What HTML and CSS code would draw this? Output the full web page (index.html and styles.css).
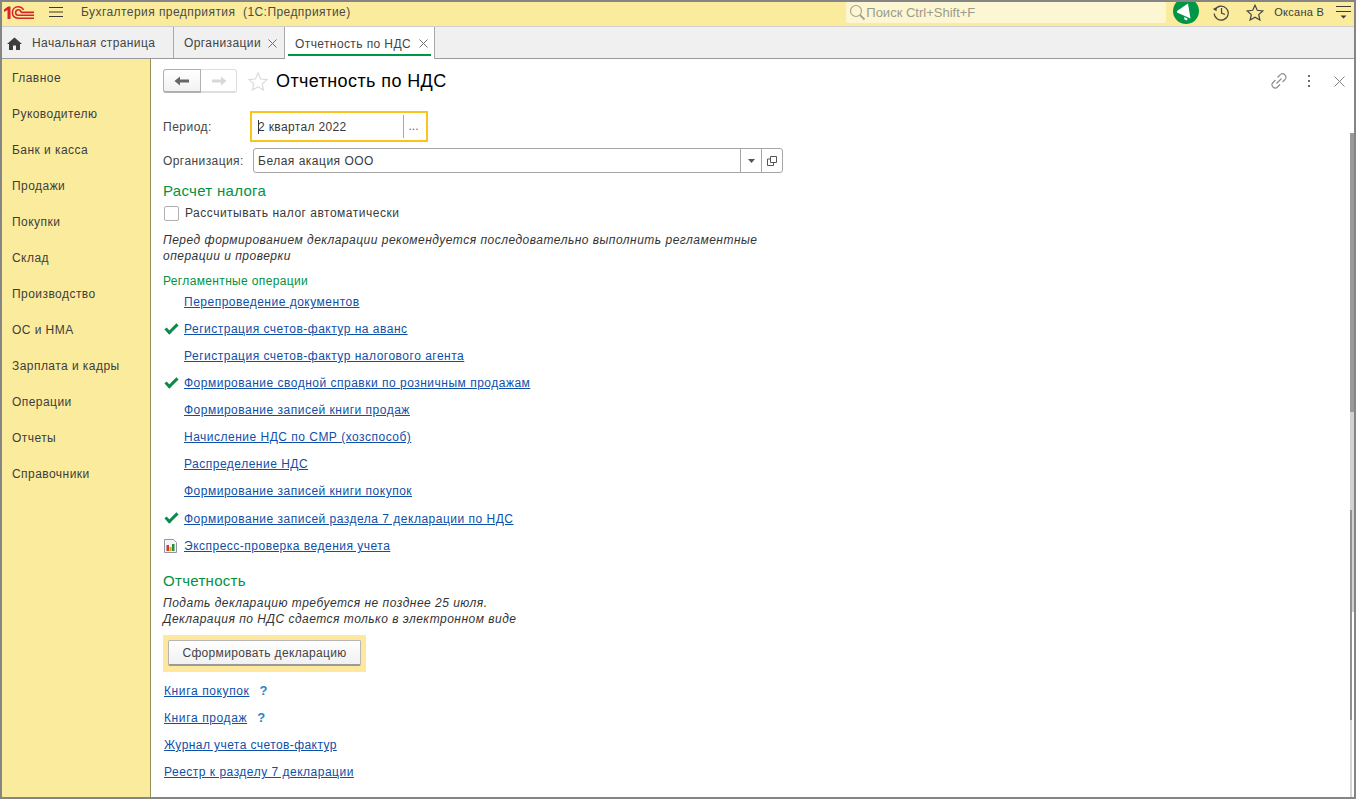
FILE: index.html
```html
<!DOCTYPE html>
<html lang="ru">
<head>
    <meta charset="UTF-8">
    <title>Отчетность по НДС</title>
    <link rel="stylesheet" href="styles.css">
</head>
<body>
<div class="window">
    <header class="topbar">
        <svg class="logo" width="30" height="13" viewBox="0 0 30 13">
            <path d="M0 3.5L4 0.5H6.5V13H3.5V4L0 6Z" fill="#d8232a"/>
            <path d="M19.5 4C18.5 1.8 16.5 0.8 14.2 0.8C10.6 0.8 8.4 3.4 8.4 6.6C8.4 10 10.6 12.2 14.2 12.2H30" fill="none" stroke="#d8232a" stroke-width="1.6"/>
            <path d="M30 9.3H14.4C12.8 9.3 11.6 8.2 11.6 6.6C11.6 5 12.8 3.8 14.4 3.8C15.8 3.8 16.8 4.6 17.4 6.4H30" fill="none" stroke="#d8232a" stroke-width="1.6"/>
        </svg>
        <svg class="burger" width="14" height="12" viewBox="0 0 14 12">
            <path d="M0 1.5H14M0 6H14M0 10.5H14" stroke="#3a3a3a" stroke-width="1"/>
        </svg>
        <span class="app-title">Бухгалтерия предприятия&nbsp; (1С:Предприятие)</span>
        <div class="search">
            <svg width="17" height="17" viewBox="0 0 17 17">
                <circle cx="7" cy="7" r="5.5" fill="none" stroke="#a8a490" stroke-width="1.2"/>
                <path d="M11 11L15.5 15.5" stroke="#a8a490" stroke-width="2"/>
            </svg>
            <span>Поиск Ctrl+Shift+F</span>
        </div>
        <div class="bell">
            <svg width="26" height="22" viewBox="0 0 26 22">
                <circle cx="13" cy="9" r="13" fill="#009646"/>
                <path d="M4 9L15 1.5L17.5 16.5L4 10.5Z" fill="#fff"/>
                <path d="M11 15L14.5 16.5L14 18.5L11.5 17.5Z" fill="#fff"/>
            </svg>
        </div>
        <svg class="top-icon" width="18" height="18" viewBox="0 0 18 18">
            <path d="M3.2 6.5A7 7 0 1 1 2.2 10.5" fill="none" stroke="#444" stroke-width="1.2"/>
            <path d="M0.8 6L4.5 4.2L4.6 8.2Z" fill="#444"/>
            <path d="M9.5 5V10L13 11.5" fill="none" stroke="#444" stroke-width="1.2"/>
        </svg>
        <svg class="top-icon fav" width="18" height="17" viewBox="0 0 18 17">
            <path d="M9 1.2L11.3 6.3L16.8 6.9L12.7 10.6L13.9 16L9 13.2L4.1 16L5.3 10.6L1.2 6.9L6.7 6.3Z" fill="none" stroke="#444" stroke-width="1.2"/>
        </svg>
        <span class="user">Оксана В</span>
        <svg class="menu-more" width="15" height="15" viewBox="0 0 15 15">
            <path d="M0 1.5H15M0 6.5H15" stroke="#3a3a3a" stroke-width="1"/>
            <path d="M4.5 10.5H10.5L7.5 13.5Z" fill="#3a3a3a"/>
        </svg>
    </header>

    <nav class="tabs">
        <div class="tab tab-home">
            <svg width="15" height="13" viewBox="0 0 15 13">
                <path d="M7.5 0.5L15 7H13V13H9V8.5H6V13H2V7H0Z" fill="#3d3d3d"/>
            </svg>
            <span>Начальная страница</span>
        </div>
        <div class="tab tab-org">
            <span>Организации</span>
            <svg class="tab-close" width="9" height="9" viewBox="0 0 9 9"><path d="M0.5 0.5L8.5 8.5M8.5 0.5L0.5 8.5" stroke="#707070" stroke-width="1"/></svg>
        </div>
        <div class="tab tab-active">
            <span>Отчетность по НДС</span>
            <svg class="tab-close" width="9" height="9" viewBox="0 0 9 9"><path d="M0.5 0.5L8.5 8.5M8.5 0.5L0.5 8.5" stroke="#707070" stroke-width="1"/></svg>
        </div>
    </nav>

    <div class="body">
        <aside class="sidebar">
            <a>Главное</a>
            <a>Руководителю</a>
            <a>Банк и касса</a>
            <a>Продажи</a>
            <a>Покупки</a>
            <a>Склад</a>
            <a>Производство</a>
            <a>ОС и НМА</a>
            <a>Зарплата и кадры</a>
            <a>Операции</a>
            <a>Отчеты</a>
            <a>Справочники</a>
        </aside>

        <main class="content">
            <div class="form-head">
                <div class="nav-btns">
                    <button class="nav-btn nav-back">
                        <svg width="16" height="10" viewBox="0 0 16 10"><path d="M0.5 5L6 0.5V3.5H15V6.5H6V9.5Z" fill="#666"/></svg>
                    </button>
                    <button class="nav-btn nav-fwd">
                        <svg width="16" height="10" viewBox="0 0 16 10"><path d="M15.5 5L10 0.5V3.5H1V6.5H10V9.5Z" fill="#d8d8d8"/></svg>
                    </button>
                </div>
                <svg class="form-star" width="20" height="19" viewBox="0 0 20 19">
                    <path d="M10 1L12.6 7L19 7.6L14.2 11.8L15.6 18L10 14.8L4.4 18L5.8 11.8L1 7.6L7.4 7Z" fill="none" stroke="#dcdcdc" stroke-width="1.2"/>
                </svg>
                <h1>Отчетность по НДС</h1>
                <div class="form-tools">
                    <svg width="16" height="16" viewBox="0 0 16 16">
                        <path d="M6.5 4.5L9 2A3 3 0 0 1 14 6.5L11.5 9M4.5 7L2 9.5A3 3 0 0 0 6.5 14L9 11.5M5.5 10.5L10.5 5.5" fill="none" stroke="#8a8a8a" stroke-width="1.1"/>
                    </svg>
                    <svg class="dots" width="4" height="12" viewBox="0 0 4 12">
                        <path d="M1 0H3V2H1ZM1 5H3V7H1ZM1 10H3V12H1Z" fill="#6e6e6e"/>
                    </svg>
                    <svg width="11" height="11" viewBox="0 0 11 11">
                        <path d="M0.5 0.5L10.5 10.5M10.5 0.5L0.5 10.5" stroke="#808080" stroke-width="1"/>
                    </svg>
                </div>
            </div>

            <div class="field field-period">
                <label>Период:</label>
                <div class="input input-focus">
                    <span class="input-text"><i class="caret"></i>2 квартал 2022</span>
                    <span class="input-more">...</span>
                </div>
            </div>
            <div class="field field-org">
                <label>Организация:</label>
                <div class="input input-org">
                    <span class="input-text">Белая акация ООО</span>
                    <span class="input-btn"><svg width="7" height="4" viewBox="0 0 7 4"><path d="M0 0H7L3.5 4Z" fill="#555"/></svg></span>
                    <span class="input-btn"><svg width="10" height="10" viewBox="0 0 10 10"><path d="M3.5 0.5H9.5V6.5H3.5ZM3 3H0.5V9.5H6.5V7" fill="none" stroke="#555"/></svg></span>
                </div>
            </div>

            <h2 class="group-title">Расчет налога</h2>
            <div class="check-row">
                <span class="checkbox"></span>
                <span>Рассчитывать налог автоматически</span>
            </div>
            <p class="note note-ops">Перед формированием декларации рекомендуется последовательно выполнить регламентные<br>операции и проверки</p>

            <h3 class="sub-title">Регламентные операции</h3>
            <ul class="ops">
                <li><a>Перепроведение документов</a></li>
                <li class="done"><a>Регистрация счетов-фактур на аванс</a></li>
                <li><a>Регистрация счетов-фактур налогового агента</a></li>
                <li class="done"><a>Формирование сводной справки по розничным продажам</a></li>
                <li><a>Формирование записей книги продаж</a></li>
                <li><a>Начисление НДС по СМР (хозспособ)</a></li>
                <li><a>Распределение НДС</a></li>
                <li><a>Формирование записей книги покупок</a></li>
                <li class="done row-tall"><a>Формирование записей раздела 7 декларации по НДС</a></li>
                <li class="report">
                    <svg class="report-icon" width="13" height="14" viewBox="0 0 13 14">
                        <path d="M0.5 0.5H9.5L12.5 3.5V13.5H0.5Z" fill="#f4f4f4" stroke="#8d97a5"/>
                        <rect x="2.5" y="6" width="2.5" height="6" fill="#d8342a"/>
                        <rect x="5.5" y="8" width="2" height="4" fill="#e2a020"/>
                        <rect x="8" y="5" width="2.5" height="7" fill="#2e8b3d"/>
                    </svg>
                    <a>Экспресс-проверка ведения учета</a>
                </li>
            </ul>

            <h2 class="group-title group-report">Отчетность</h2>
            <p class="note note-report">Подать декларацию требуется не позднее 25 июля.<br>Декларация по НДС сдается только в электронном виде</p>
            <div class="btn-wrap"><button class="btn">Сформировать декларацию</button></div>

            <ul class="books">
                <li class="book-wide"><a>Книга покупок</a><span class="help">?</span></li>
                <li class="book-wide"><a>Книга продаж</a><span class="help">?</span></li>
                <li class="book-tight"><a>Журнал учета счетов-фактур</a></li>
                <li><a>Реестр к разделу 7 декларации</a></li>
            </ul>

            <div class="scrollbar">
                <div class="scroll-col scroll-left"></div>
                <div class="scroll-col scroll-right"></div>
            </div>
        </main>
    </div>
</div>
</body>
</html>
```

FILE: styles.css
```css
html, body {
    margin: 0;
    padding: 0;
    height: 100%;
    overflow: hidden;
}

body {
    font-family: "Liberation Sans", Arial, sans-serif;
    font-size: 12px;
    letter-spacing: 0.5px;
    color: #3a3a3a;
    background: #fff;
}

a {
    color: #0f4fa8;
    text-decoration: underline;
}

ul {
    list-style: none;
    margin: 0;
    padding: 0;
}

.window {
    height: 799px;
    box-sizing: border-box;
    border: 2px solid #858585;
    display: flex;
    flex-direction: column;
}

/* top yellow bar */
.topbar {
    height: 25px;
    flex: none;
    box-sizing: border-box;
    display: flex;
    align-items: center;
    padding-bottom: 4px;
    background: #fbec9d;
    border-bottom: 1px solid #cfcfcf;
}

.logo {
    margin-left: 2px;
}

.burger {
    margin-left: 15px;
}

.app-title {
    margin-left: 18px;
    letter-spacing: 0.44px;
    color: #4a4a4a;
}

.search {
    margin-left: auto;
    width: 320px;
    height: 21px;
    box-sizing: border-box;
    padding-left: 3px;
    align-self: flex-start;
    display: flex;
    align-items: center;
    background: #fdf6d2;
    border-radius: 2px;
    color: #9b9b8d;
    font-size: 13px;
    letter-spacing: 0;
}

.bell {
    margin-left: 7px;
    width: 26px;
    height: 22px;
    align-self: flex-start;
    overflow: hidden;
}

.top-icon {
    margin-left: 13px;
}

.fav {
    margin-left: 16px;
}

.user {
    margin-left: 10px;
    font-size: 11px;
    letter-spacing: 0.25px;
}

.menu-more {
    margin-left: 12px;
    margin-right: 3px;
}

/* tabs */
.tabs {
    height: 32px;
    flex: none;
    display: flex;
    background: #f0f0f0;
    border-bottom: 1px solid #9a9a9a;
    box-sizing: border-box;
}

.tab {
    display: flex;
    align-items: center;
    box-sizing: border-box;
    padding-top: 1px;
    border-right: 1px solid #a8a8a8;
    letter-spacing: 0.4px;
    color: #444;
}

.tab-home {
    width: 172px;
    padding-left: 5px;
    gap: 10px;
}

.tab-org {
    width: 111px;
    padding-left: 10px;
    gap: 7px;
}

.tab-active {
    width: 150px;
    padding-left: 10px;
    gap: 8px;
    background: #fff;
    margin-bottom: -1px;
    position: relative;
}

.tab-active::after {
    content: "";
    position: absolute;
    left: 3px;
    right: 3px;
    bottom: 3px;
    height: 2px;
    background: #009646;
}

.body {
    flex: 1;
    display: flex;
    min-height: 0;
}

/* left menu */
.sidebar {
    width: 149px;
    flex: none;
    box-sizing: border-box;
    background: #fbec9d;
    border-right: 1px solid #978f5a;
    padding-top: 1px;
    letter-spacing: 0.45px;
}

.sidebar a {
    display: block;
    height: 36px;
    line-height: 36px;
    padding-left: 10px;
    color: #3d3d3d;
    text-decoration: none;
}

/* form */
.content {
    flex: 1;
    position: relative;
    padding-left: 12px;
    min-width: 0;
}

.form-head {
    height: 44px;
    display: flex;
    align-items: center;
}

.nav-btns {
    display: flex;
}

.nav-btn {
    height: 24px;
    padding: 0;
    display: flex;
    align-items: center;
    justify-content: center;
    background: #fff;
    box-sizing: border-box;
}

.nav-back {
    width: 38px;
    border: 1px solid #b0b0b0;
    border-bottom-width: 2px;
    border-radius: 3px 0 0 3px;
    background: linear-gradient(#fff, #f2f2f2);
}

.nav-fwd {
    width: 36px;
    border: 1px solid #dedede;
    border-left: none;
    border-bottom-width: 2px;
    border-radius: 0 3px 3px 0;
}

.form-star {
    margin-left: 11px;
}

.form-head h1 {
    margin: 0 0 0 8px;
    font-size: 18px;
    font-weight: normal;
    letter-spacing: 0.4px;
    color: #000;
}

.form-tools {
    margin-left: auto;
    margin-right: 9px;
    display: flex;
    align-items: center;
}

.form-tools .dots {
    margin: 0 23px 0 20px;
}

.field {
    display: flex;
    align-items: center;
}

.field label {
    width: 90px;
    flex: none;
    color: #444;
}

.field-period {
    margin-top: 8px;
    margin-bottom: 6px;
}

.field-period label {
    width: 87px;
}

.input {
    box-sizing: border-box;
    display: flex;
    align-items: center;
    background: #fff;
}

.input-focus {
    width: 178px;
    height: 31px;
    border: 2px solid #f9c41f;
    padding-left: 6px;
}

.input-focus .input-text {
    flex: 1;
    letter-spacing: 0.35px;
}

.caret {
    display: inline-block;
    width: 1px;
    height: 14px;
    margin-right: -1px;
    vertical-align: -3px;
    background: #333;
}

.input-more {
    width: 23px;
    height: 23px;
    line-height: 23px;
    box-sizing: border-box;
    padding-right: 3px;
    border-left: 1px solid #a8a8a8;
    text-align: center;
    letter-spacing: 0;
    color: #666;
}

.input-org {
    width: 530px;
    height: 25px;
    border: 1px solid #a6a6a6;
    border-radius: 3px;
    padding-left: 4px;
}

.input-org .input-text {
    flex: 1;
    padding-top: 1px;
}

.field-org label {
    padding-top: 1px;
    letter-spacing: 0.42px;
}

.input-btn {
    width: 21px;
    height: 23px;
    box-sizing: border-box;
    border-left: 1px solid #a6a6a6;
    display: flex;
    align-items: center;
    justify-content: center;
}

.group-title {
    margin: 0;
    font-size: 15px;
    font-weight: normal;
    letter-spacing: 0.3px;
    line-height: 20px;
    color: #00923f;
}

.field-org + .group-title {
    margin-top: 8px;
}

.check-row {
    display: flex;
    align-items: center;
    gap: 6px;
    height: 22px;
    margin-top: 1px;
    margin-left: 1px;
}

.checkbox {
    width: 13px;
    height: 13px;
    border: 1px solid #b0b0b0;
    border-radius: 2px;
    background: #fff;
}

.note {
    margin: 0;
    font-style: italic;
    color: #333;
    line-height: 16px;
    letter-spacing: 0.49px;
}

.note-ops {
    margin-top: 8px;
}

.sub-title {
    margin: 9px 0 0;
    font-size: 12px;
    font-weight: normal;
    letter-spacing: 0.35px;
    line-height: 16px;
    color: #00923f;
}

.ops li {
    height: 27px;
    line-height: 27px;
    padding-left: 21px;
    position: relative;
}

.ops li.row-tall {
    padding-top: 1px;
}

.ops li.done::before {
    content: "";
    position: absolute;
    left: 2px;
    top: 8px;
    width: 13px;
    height: 7px;
    border-left: 3px solid #0b8a4a;
    border-bottom: 3px solid #0b8a4a;
    transform: rotate(-45deg);
    box-sizing: border-box;
}

.report-icon {
    position: absolute;
    left: 1px;
    top: 6px;
}

.group-report {
    margin-top: 11px;
}

.note-report {
    margin-top: 4px;
}

.btn-wrap {
    margin-top: 8px;
    width: 203px;
    height: 37px;
    box-sizing: border-box;
    padding: 5px;
    background: #fde89d;
}

.btn {
    display: block;
    width: 193px;
    height: 26px;
    padding: 0;
    border: 1px solid #b5b5b5;
    border-bottom: 2px solid #9a9a9a;
    border-radius: 2px;
    background: linear-gradient(#fff, #f1f1f1);
    font: inherit;
    letter-spacing: 0.33px;
    color: #444;
}

.books {
    margin-top: 6px;
    padding-left: 1px;
}

.books li {
    height: 27px;
    line-height: 27px;
}

.book-wide a {
    letter-spacing: 0.62px;
}

.book-tight a {
    letter-spacing: 0.42px;
}

.help {
    margin-left: 10px;
    font-size: 13px;
    line-height: 1;
    font-weight: bold;
    color: #2a84c4;
}

/* page scrollbars, two overlapping strips */
.scrollbar {
    position: absolute;
    right: 0;
    top: 74px;
    bottom: 0;
    width: 4px;
    display: flex;
}

.scroll-col {
    width: 2px;
}

.scroll-left {
    background: linear-gradient(#999 279px, #d0d0d0 279px, #d0d0d0 377px, #909090 377px, #909090 587px, #d4d4d4 587px);
}

.scroll-right {
    background: linear-gradient(#999 279px, #d0d0d0 279px, #d0d0d0 479px, #fff 479px);
}
```
